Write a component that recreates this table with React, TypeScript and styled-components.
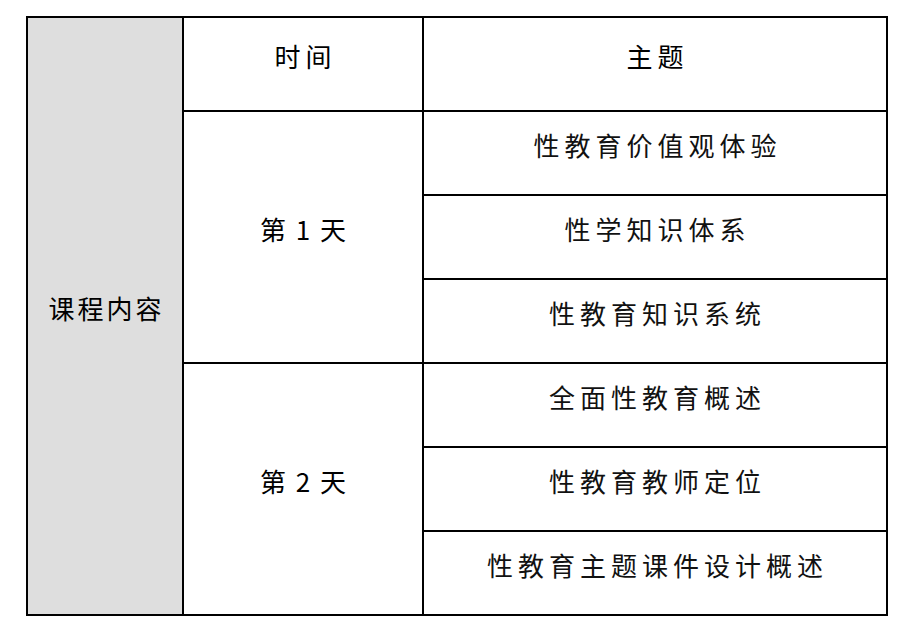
import React from 'react';
import styled, { createGlobalStyle } from 'styled-components';

const GlobalStyle = createGlobalStyle`
	body {
		margin: 0;
		background: #ffffff;
		font-family: 'Noto Sans CJK SC', 'Noto Sans', sans-serif;
		color: #000000;
	}
`;

const Page = styled.div`
	padding: 16px 0 0 26px;
`;

const Table = styled.table`
	border-collapse: collapse;
	table-layout: fixed;
	width: 862px;
	border: 2px solid #000000;
`;

const Cell = styled.td<{ $gray?: boolean; $head?: boolean }>`
	border: 2px solid #000000;
	background: ${(p) => (p.$gray ? '#dedede' : '#ffffff')};
	height: ${(p) => (p.$head ? 75 : 65)}px;
	padding: 0 0 17px;
	text-align: center;
	vertical-align: middle;
	font-size: 26px;
	letter-spacing: ${(p) => (p.$gray ? 3 : 5)}px;
	text-indent: ${(p) => (p.$gray ? 3 : 5)}px;
	line-height: 1;
	white-space: nowrap;
`;

const Day = styled(Cell)`
	letter-spacing: 2px;
	text-indent: 2px;
`;

const Theme = styled(Cell)`
	letter-spacing: 5px;
	text-indent: 5px;
	color: #111111;
`;

const days = [
	{ label: '第 1 天', topics: ['性教育价值观体验', '性学知识体系', '性教育知识系统'] },
	{ label: '第 2 天', topics: ['全面性教育概述', '性教育教师定位', '性教育主题课件设计概述'] },
];

const App: React.FC = () => {
	return (
		<Page>
			<GlobalStyle />
			<Table>
				<colgroup>
					<col style={{ width: 156 }} />
					<col style={{ width: 240 }} />
					<col style={{ width: 464 }} />
				</colgroup>
				<tbody>
					<tr>
						<Cell $gray rowSpan={7}>课程内容</Cell>
						<Cell $head>时间</Cell>
						<Cell $head>主题</Cell>
					</tr>
					{days.map((day) =>
						day.topics.map((topic, i) => (
							<tr key={topic}>
								{i === 0 && <Day rowSpan={day.topics.length}>{day.label}</Day>}
								<Theme>{topic}</Theme>
							</tr>
						))
					)}
				</tbody>
			</Table>
		</Page>
	);
};

export default App;
